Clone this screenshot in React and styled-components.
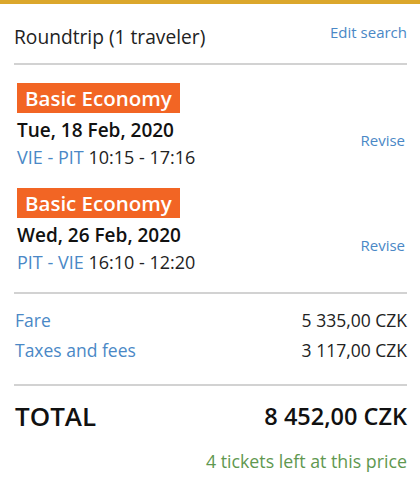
import styled, { createGlobalStyle } from "styled-components";

const GlobalStyle = createGlobalStyle`
	body {
		margin: 0;
		background: #fff;
		font-family: "Open Sans", "Liberation Sans", sans-serif;
		color: #222;
	}
`;

const flights = [
	{ date: "Tue, 18 Feb, 2020", route: "VIE - PIT", time: "10:15 - 17:16" },
	{ date: "Wed, 26 Feb, 2020", route: "PIT - VIE", time: "16:10 - 12:20" },
];

export default function App() {
	return (
		<>
			<GlobalStyle />
			<Card>
				<Header>
					<Title>Roundtrip (1 traveler)</Title>
					<EditLink>Edit search</EditLink>
				</Header>
				<Divider />
				<Flights>
					{flights.map((f) => (
						<Flight key={f.date}>
							<Badge>Basic Economy</Badge>
							<FlightRow>
								<div>
									<DateText>{f.date}</DateText>
									<Route>
										<Blue>{f.route}</Blue> {f.time}
									</Route>
								</div>
								<ReviseLink>Revise</ReviseLink>
							</FlightRow>
						</Flight>
					))}
				</Flights>
				<Divider />
				<Prices>
					<PriceRow>
						<Blue>Fare</Blue>
						<span>5 335,00 CZK</span>
					</PriceRow>
					<PriceRow>
						<Blue>Taxes and fees</Blue>
						<span>3 117,00 CZK</span>
					</PriceRow>
				</Prices>
				<Divider />
				<TotalRow>
					<TotalLabel>TOTAL</TotalLabel>
					<TotalPrice>8 452,00 CZK</TotalPrice>
				</TotalRow>
				<Left>4 tickets left at this price</Left>
			</Card>
		</>
	);
}

const Card = styled.div`
	border-top: 4px solid #dba72c;
	padding: 0 13px 0 14px;
	height: 482px;
`;

const Header = styled.div`
	display: flex;
	justify-content: space-between;
	align-items: flex-start;
	padding-top: 20px;
	height: 39px;
`;

const Title = styled.div`
	font-size: 19.2px;
	line-height: 26px;
	color: #222;
`;

const EditLink = styled.span`
	font-size: 15px;
	line-height: 20px;
	margin-top: -2px;
	color: #4a88c6;
`;

const ReviseLink = styled(EditLink)`
	margin: 0 2px 10px 0;
`;

const Divider = styled.div`
	height: 2px;
	background: #d2d2d2;
`;

const Flights = styled.div`
	display: flex;
	flex-direction: column;
	gap: 16px;
	padding: 18px 0 15px 3px;
`;

const Flight = styled.div`
	display: flex;
	flex-direction: column;
	align-items: flex-start;
`;

const Badge = styled.div`
	background: #f26524;
	color: #fff;
	font-size: 20.5px;
	font-weight: 600;
	line-height: 30px;
	padding: 0 8px;
`;

const FlightRow = styled.div`
	align-self: stretch;
	display: flex;
	justify-content: space-between;
	align-items: center;
	padding-top: 4px;
`;

const DateText = styled.div`
	font-size: 19px;
	font-weight: 600;
	line-height: 26px;
	color: #111;
`;

const Route = styled.div`
	font-size: 18px;
	line-height: 29px;
`;

const Blue = styled.span`
	color: #4a88c6;
`;

const Prices = styled.div`
	display: flex;
	flex-direction: column;
	padding: 11px 0 19px 1px;
`;

const PriceRow = styled.div`
	display: flex;
	justify-content: space-between;
	font-size: 17.5px;
	line-height: 30px;
`;

const TotalRow = styled.div`
	display: flex;
	justify-content: space-between;
	align-items: center;
	padding: 12px 0 0 1px;
	line-height: 36px;
	color: #111;
`;

const TotalLabel = styled.span`
	font-size: 26px;
	font-weight: 600;
`;

const TotalPrice = styled.span`
	font-size: 23.5px;
	font-weight: 600;
`;

const Left = styled.div`
	text-align: right;
	font-size: 17.8px;
	line-height: 24px;
	color: #5f9850;
	padding-top: 15px;
`;
